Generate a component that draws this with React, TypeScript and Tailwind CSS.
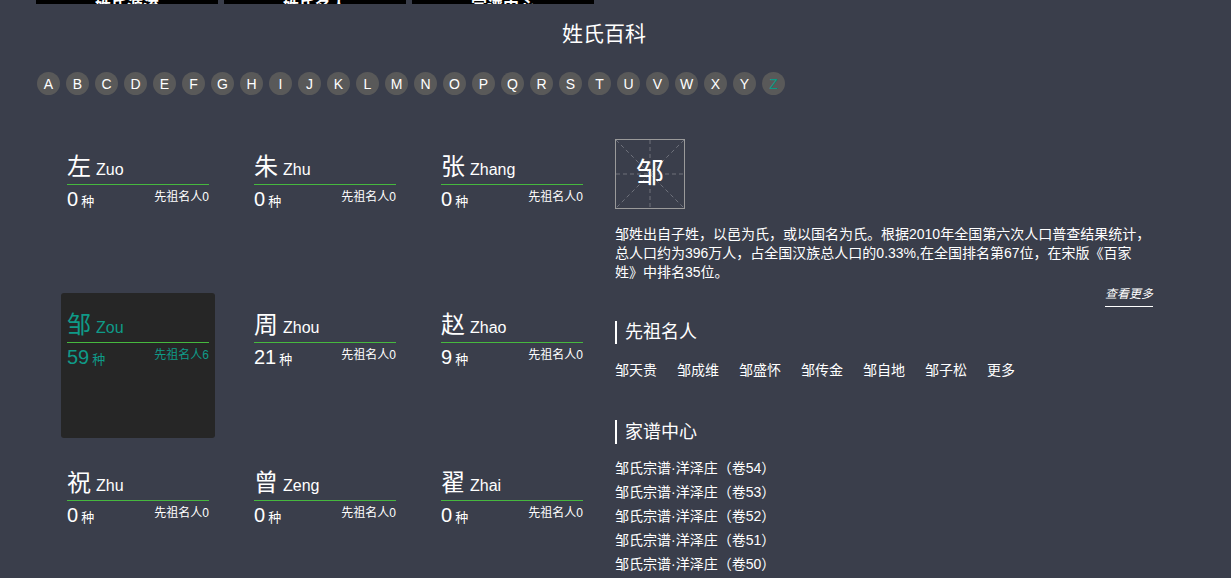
import React from "react";

const letters = "ABCDEFGHIJKLMNOPQRSTUVWXYZ".split("");

type Card = { c: string; p: string; n: number; m: number; active?: boolean };
const cards: Card[] = [
  { c: "左", p: "Zuo", n: 0, m: 0 },
  { c: "朱", p: "Zhu", n: 0, m: 0 },
  { c: "张", p: "Zhang", n: 0, m: 0 },
  { c: "邹", p: "Zou", n: 59, m: 6, active: true },
  { c: "周", p: "Zhou", n: 21, m: 0 },
  { c: "赵", p: "Zhao", n: 9, m: 0 },
  { c: "祝", p: "Zhu", n: 0, m: 0 },
  { c: "曾", p: "Zeng", n: 0, m: 0 },
  { c: "翟", p: "Zhai", n: 0, m: 0 },
];

const famous = ["邹天贵", "邹成维", "邹盛怀", "邹传金", "邹自地", "邹子松", "更多"];
const books = [54, 53, 52, 51, 50];

const font = { fontFamily: '"Liberation Sans", "Noto Sans CJK SC", Arial, sans-serif' };

export default function App() {
  return (
    <div className="min-h-[578px] w-full bg-[#3a3e4b] text-white overflow-hidden" style={font}>
      <div className="ml-[36px] w-[1136px]">
        {/* top clipped bars */}
        <div className="flex h-[4px] items-end gap-[6px] overflow-hidden">
          {["姓氏源流", "姓氏名人", "家谱中心"].map((t) => (
            <div key={t} className="flex h-[40px] w-[182px] shrink-0 items-end justify-center bg-black pb-0">
              <span className="text-[16px] leading-[18px] font-bold text-white translate-y-[12px]">{t}</span>
            </div>
          ))}
        </div>

        {/* title */}
        <h1 className="mt-[15px] text-center text-[21px] leading-[30px] text-white">姓氏百科</h1>

        {/* letters */}
        <div className="mt-[23px] flex gap-[6px] pl-[1px]">
          {letters.map((l) => (
            <div
              key={l}
              className={`flex h-[23px] w-[23px] items-center justify-center rounded-full bg-[#595959] text-[14px] leading-none ${
                l === "Z" ? "text-[#0c9985]" : "text-white"
              }`}
            >
              {l}
            </div>
          ))}
        </div>

        {/* content */}
        <div className="mt-[40px] flex">
          <div className="grid grid-cols-[154px_154px_154px] gap-x-[33px] gap-y-[13px] pl-[25px]">
            {cards.map((card, i) => (
              <div
                key={i}
                className={`h-[145px] rounded-[3px] px-[6px] pt-[17px] ${
                  card.active ? "bg-[#262626] text-[#0f9a88]" : "text-white"
                }`}
              >
                <div className="flex items-baseline border-b border-[#46b83e] pb-[2px]">
                  <span className="text-[24px] leading-[30px]">{card.c}</span>
                  <span className="ml-[5px] text-[16px] leading-[20px]">{card.p}</span>
                </div>
                <div className="flex items-start justify-between">
                  <div className="flex items-baseline">
                    <span className="text-[20px] leading-[28px]">{card.n}</span>
                    <span className="ml-[3px] text-[13px]">种</span>
                  </div>
                  <span className="mt-[4px] text-[12px] leading-[16px]">先祖名人{card.m}</span>
                </div>
              </div>
            ))}
          </div>

          {/* right panel */}
          <div className="ml-[26px] w-[538px] pt-[4px]">
            <div className="relative h-[70px] w-[70px] border border-[#9a9a9a]">
              <svg className="absolute inset-0" width="68" height="68" viewBox="0 0 68 68">
                <g stroke="#6e717b" strokeWidth="1" strokeDasharray="4 3" fill="none">
                  <line x1="0" y1="34" x2="68" y2="34" />
                  <line x1="34" y1="0" x2="34" y2="68" />
                  <line x1="0" y1="0" x2="68" y2="68" />
                  <line x1="68" y1="0" x2="0" y2="68" />
                </g>
              </svg>
              <div className="absolute inset-0 flex items-center justify-center text-[28px] text-white">邹</div>
            </div>

            <p className="mt-[16px] text-[14px] leading-[19px] text-white">
              邹姓出自子姓，以邑为氏，或以国名为氏。根据2010年全国第六次人口普查结果统计，
              <br />
              总人口约为396万人，占全国汉族总人口的0.33%,在全国排名第67位，在宋版《百家
              <br />
              姓》中排名35位。
            </p>
            <div className="mt-[3px] flex justify-end">
              <span className="border-b border-white pb-[3px] text-[12px] italic leading-[18px]">查看更多</span>
            </div>

            <div className="mt-[14px] border-l-2 border-white pl-[8px] text-[18px] leading-[23px]">先祖名人</div>
            <div className="mt-[16px] flex gap-[20px] text-[14px] leading-[20px]">
              {famous.map((f) => (
                <span key={f}>{f}</span>
              ))}
            </div>

            <div className="mt-[40px] border-l-2 border-white pl-[8px] text-[18px] leading-[24px]">家谱中心</div>
            <div className="mt-[12px] flex flex-col text-[14px] leading-[24px]">
              {books.map((b) => (
                <span key={b}>邹氏宗谱·洋泽庄（卷{b}）</span>
              ))}
            </div>
          </div>
        </div>
      </div>
    </div>
  );
}
